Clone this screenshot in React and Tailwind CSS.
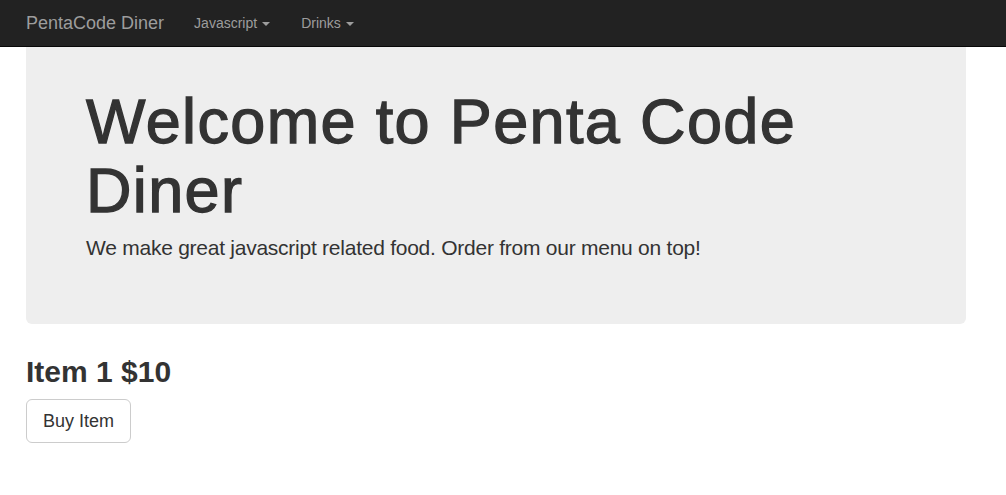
export default function App() {
  return (
    <div className="min-h-[495px] bg-white font-['Liberation_Sans',Arial,sans-serif] text-[#333]">
      <nav className="flex h-[47px] items-center border-b border-[#080808] bg-[#222] pl-[26px]">
        <a className="text-[18px] leading-[20px] text-[#9d9d9d]">PentaCode Diner</a>
        <ul className="ml-[30px] flex items-center">
          {['Javascript', 'Drinks'].map((label) => (
            <li key={label} className="mr-[31px] flex items-center text-[14px] leading-[20px] text-[#9d9d9d]">
              {label}
              <span className="ml-[5px] mt-[2px] inline-block h-0 w-0 border-x-[4px] border-t-[4px] border-x-transparent border-t-[#9d9d9d]" />
            </li>
          ))}
        </ul>
      </nav>

      <div className="ml-[26px] w-[940px]">
        <div className="rounded-b-[6px] bg-[#eee] px-[60px] pb-[61px] pt-[40px]">
          <h1 className="text-[63px] leading-[69px] tracking-[1.35px] text-[#333] [-webkit-text-stroke:1.3px_#333]">
            Welcome to Penta Code Diner
          </h1>
          <p className="mt-[8px] text-[21px] font-light leading-[30px] tracking-[-0.25px]">
            We make great javascript related food. Order from our menu on top!
          </p>
        </div>

        <h2 className="mt-[31px] text-[30px] font-bold leading-[33px]">Item 1 $10</h2>
        <button className="mt-[11px] h-[44px] rounded-[6px] border border-[#ccc] bg-white px-[16px] text-[18px] leading-[24px] text-[#333]">
          Buy Item
        </button>
      </div>
    </div>
  )
}
